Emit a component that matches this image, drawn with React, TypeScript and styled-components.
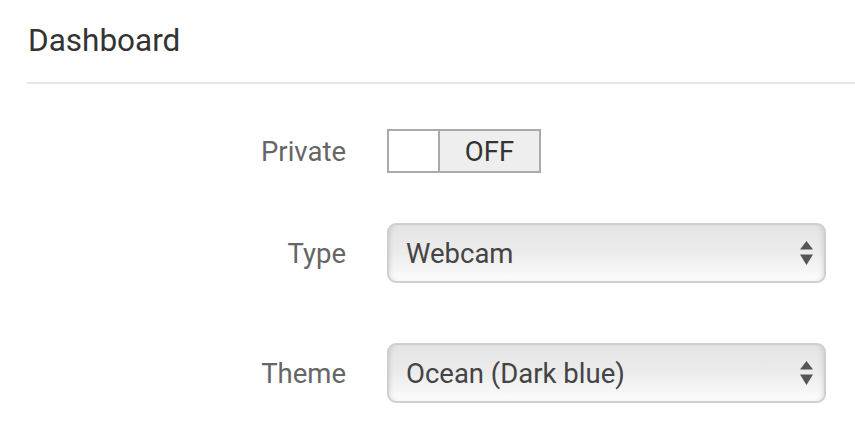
import React from "react";
import styled, { createGlobalStyle } from "styled-components";

const Global = createGlobalStyle`
  html, body { margin: 0; padding: 0; background: #fff; }
  body { font-family: Roboto, "Noto Sans", "Liberation Sans", sans-serif; }
`;

const Page = styled.div`
  padding: 0 0 0 27px;
`;

const Header = styled.div`
  height: 84px;
  display: flex;
  align-items: flex-start;
  border-bottom: 2px solid #e6e6e6;
  box-sizing: border-box;
`;

const Title = styled.h1`
  margin: 21px 0 0 1px;
  font-size: 31.5px;
  font-weight: 400;
  color: #333;
  line-height: 40px;
`;

const Form = styled.div`
  display: grid;
  grid-template-columns: 319px 439px;
  column-gap: 41px;
  align-items: center;
  padding-top: 45px;
`;

const Label = styled.label<{ $mt?: number }>`
  text-align: right;
  font-size: 27.5px;
  color: #666;
  margin-top: ${(p) => p.$mt ?? 0}px;
`;

const Cell = styled.div<{ $mt?: number }>`
  margin-top: ${(p) => p.$mt ?? 0}px;
  display: flex;
`;

const Toggle = styled.div`
  display: flex;
  width: 154px;
  height: 44px;
  box-sizing: border-box;
  border: 2px solid #aaa;
`;

const Knob = styled.div`
  width: 49px;
  background: #fff;
  border-right: 2px solid #aaa;
`;

const ToggleText = styled.div`
  flex: 1;
  background: #eee;
  display: flex;
  align-items: center;
  justify-content: center;
  font-size: 27.5px;
  color: #333;
`;

const Select = styled.div`
  position: relative;
  width: 439px;
  height: 60px;
  box-sizing: border-box;
  border: 2px solid #cfcfcf;
  border-radius: 9px;
  background: linear-gradient(#e4e4e4 0%, #ececec 50%, #fcfcfc 100%);
  box-shadow: inset 4px 0 5px -3px rgba(0, 0, 0, 0.12),
    inset -4px 0 5px -3px rgba(0, 0, 0, 0.12);
  display: flex;
  align-items: center;
  padding-left: 17px;
  font-size: 27.5px;
  color: #444;
`;

const Arrows = styled.svg`
  position: absolute;
  right: 11px;
  top: 50%;
  transform: translateY(-50%);
`;

function SelectBox({ value }: { value: string }) {
  return (
    <Select>
      {value}
      <Arrows width="13" height="25" viewBox="0 0 13 25">
        <polygon points="6.5,0.5 13,9 0,9" fill="#555" />
        <polygon points="0,14 13,14 6.5,24.5" fill="#555" />
      </Arrows>
    </Select>
  );
}

export default function App() {
  return (
    <Page>
      <Global />
      <Header>
        <Title>Dashboard</Title>
      </Header>
      <Form>
        <Label>Private</Label>
        <Cell>
          <Toggle>
            <Knob />
            <ToggleText>OFF</ToggleText>
          </Toggle>
        </Cell>
        <Label $mt={50}>Type</Label>
        <Cell $mt={50}>
          <SelectBox value="Webcam" />
        </Cell>
        <Label $mt={60}>Theme</Label>
        <Cell $mt={60}>
          <SelectBox value="Ocean (Dark blue)" />
        </Cell>
      </Form>
    </Page>
  );
}
